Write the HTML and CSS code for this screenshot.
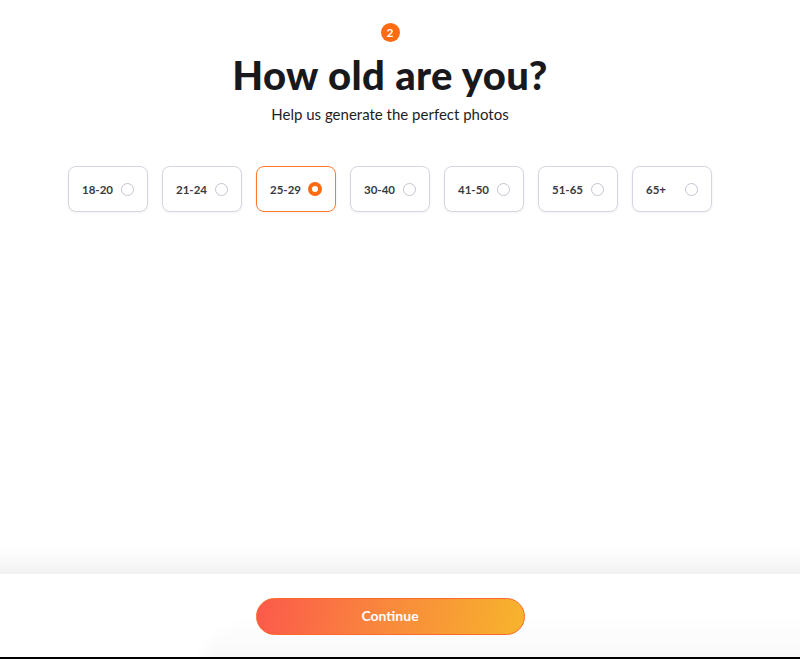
FILE: index.html
```html
<!DOCTYPE html>
<html lang="en">
<head>
<meta charset="utf-8">
<title>How old are you?</title>
<link rel="stylesheet" href="styles.css">
</head>
<body>
<div class="app">
  <main class="main">
    <div class="step">2</div>
    <h1 class="title">How old are you?</h1>
    <p class="subtitle">Help us generate the perfect photos</p>
    <div class="options">
      <label class="option"><span class="label">18-20</span><span class="radio"></span></label>
      <label class="option"><span class="label">21-24</span><span class="radio"></span></label>
      <label class="option selected"><span class="label">25-29</span><span class="radio"></span></label>
      <label class="option"><span class="label">30-40</span><span class="radio"></span></label>
      <label class="option"><span class="label">41-50</span><span class="radio"></span></label>
      <label class="option"><span class="label">51-65</span><span class="radio"></span></label>
      <label class="option"><span class="label">65+</span><span class="radio"></span></label>
    </div>
  </main>
  <footer class="footer">
    <div class="footer-inner">
      <button class="continue">Continue</button>
    </div>
  </footer>
</div>
</body>
</html>
```
FILE: styles.css
```css
* { box-sizing: border-box; }
html, body { margin: 0; padding: 0; background: #fff; }
body {
  font-family: "Lato", "Liberation Sans", sans-serif;
  color: #1b1b1f;
}
.app {
  height: 659px;
  display: flex;
  flex-direction: column;
  overflow: hidden;
}
.main {
  flex: 1;
  width: 100%;
  display: flex;
  flex-direction: column;
  align-items: center;
  padding-top: 23px;
  background: linear-gradient(to bottom, #fff calc(100% - 26px), #f1f1f1 100%);
}
.step {
  width: 19px;
  height: 19px;
  margin-right: 20px;
  border-radius: 50%;
  background: #ff6b12;
  color: #fff;
  font-size: 12px;
  font-weight: 700;
  line-height: 19px;
  text-align: center;
}
.title {
  margin: 9px 20px 0 0;
  font-size: 40px;
  font-weight: 900;
  line-height: 48px;
  color: #19191d;
  letter-spacing: 0.4px;
}
.subtitle {
  margin: 5px 20px 0 0;
  font-size: 15px;
  line-height: 20px;
  color: #1e1e22;
}
.options {
  display: flex;
  gap: 14px;
  margin: 42px 20px 0 0;
}
.option {
  width: 80px;
  height: 46px;
  border: 1px solid #d6d6e0;
  border-radius: 8px;
  display: flex;
  align-items: center;
  justify-content: space-between;
  padding: 0 13px 0 13px;
  background: #fff;
  box-shadow: 0 1px 3px rgba(30, 30, 60, 0.06);
}
.option.selected { border-color: #ff7a26; }
.label {
  font-size: 11.5px;
  font-weight: 700;
  color: #3a3a3e;
}
.radio {
  width: 13px;
  height: 13px;
  border-radius: 50%;
  border: 1.5px solid #c3c5d3;
}
.selected .radio {
  border: 4px solid #ff6b12;
  width: 14px;
  height: 14px;
}
.footer {
  height: 85px;
  position: relative;
  background: #fff;
  border-bottom: 2px solid #000;
  overflow: hidden;
}
.footer::after {
  content: "";
  position: absolute;
  left: 200px;
  right: -40px;
  bottom: -40px;
  height: 80px;
  border-radius: 60px 0 0 0;
  background: linear-gradient(to bottom, rgba(0,0,0,0) 0%, rgba(0,0,0,0.02) 40%, rgba(0,0,0,0.07) 100%);
  filter: blur(6px);
  pointer-events: none;
}
.footer-inner {
  width: 780px;
  display: flex;
  justify-content: center;
  padding-top: 24px;
  position: relative;
  z-index: 1;
}
.continue {
  width: 269px;
  height: 37px;
  border: 1px solid #fb6a2c;
  border-radius: 19px;
  background: linear-gradient(100deg, #fc594b 0%, #f98a3c 50%, #f7b42c 100%);
  color: #fff;
  font-family: "Lato", "Liberation Sans", sans-serif;
  font-size: 14px;
  font-weight: 700;
  line-height: 33px;
  padding: 0 0 2px;
  cursor: pointer;
}
```
